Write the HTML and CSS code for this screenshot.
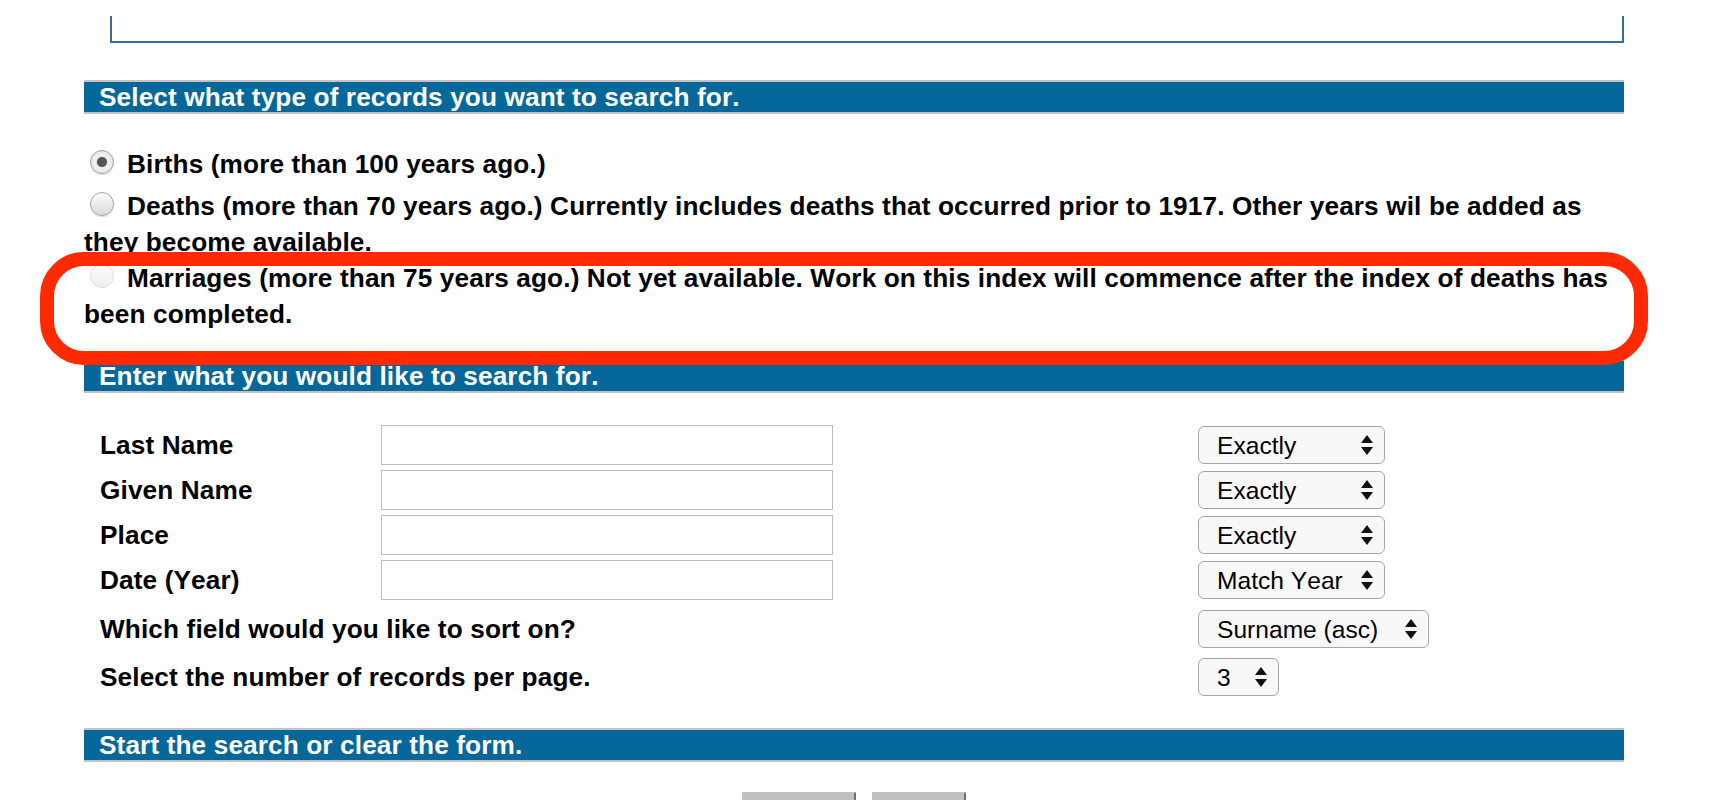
FILE: index.html
```html
<!DOCTYPE html>
<html lang="en">

<head>
    <meta charset="UTF-8">
    <meta name="viewport" content="width=device-width, initial-scale=1.0">
    <title>Search the Index</title>
    <link rel="stylesheet" href="styles.css">
</head>

<body>
    <div class="page">
        <div class="top-box"></div>

        <h2 class="bar">Select what type of records you want to search for.</h2>

        <div class="records">
            <label class="record births"><input type="radio" name="type" value="births" checked>Births (more than 100 years ago.)</label>
            <label class="record"><input type="radio" name="type" value="deaths">Deaths (more than 70 years ago.) Currently includes deaths that occurred prior to 1917. Other years wil be added as they become available.</label>
            <label class="record"><input type="radio" name="type" value="marriages" disabled>Marriages (more than 75 years ago.) Not yet available. Work on this index will commence after the index of deaths has been completed.</label>
        </div>

        <h2 class="bar">Enter what you would like to search for.</h2>

        <div class="fields">
            <label for="lastName">Last Name</label>
            <input type="text" id="lastName">
            <span class="select match">
                <select><option>Exactly</option><option>Starts with</option><option>Sounds like</option></select>
                <svg class="arrows" width="12" height="20" viewBox="0 0 12 20"><path d="M6 0L12 8H0z M6 20L0 12h12z" fill="#111"/></svg>
            </span>

            <label for="givenName">Given Name</label>
            <input type="text" id="givenName">
            <span class="select match">
                <select><option>Exactly</option><option>Starts with</option><option>Sounds like</option></select>
                <svg class="arrows" width="12" height="20" viewBox="0 0 12 20"><path d="M6 0L12 8H0z M6 20L0 12h12z" fill="#111"/></svg>
            </span>

            <label for="place">Place</label>
            <input type="text" id="place">
            <span class="select match">
                <select><option>Exactly</option><option>Starts with</option><option>Contains</option></select>
                <svg class="arrows" width="12" height="20" viewBox="0 0 12 20"><path d="M6 0L12 8H0z M6 20L0 12h12z" fill="#111"/></svg>
            </span>

            <label for="year">Date (Year)</label>
            <input type="text" id="year">
            <span class="select match">
                <select><option>Match Year</option><option>+/- 2 Years</option><option>+/- 5 Years</option></select>
                <svg class="arrows" width="12" height="20" viewBox="0 0 12 20"><path d="M6 0L12 8H0z M6 20L0 12h12z" fill="#111"/></svg>
            </span>
        </div>

        <div class="fields options">
            <label class="wide">Which field would you like to sort on?</label>
            <span class="select sort">
                <select><option>Surname (asc)</option><option>Surname (desc)</option><option>Year (asc)</option></select>
                <svg class="arrows" width="12" height="20" viewBox="0 0 12 20"><path d="M6 0L12 8H0z M6 20L0 12h12z" fill="#111"/></svg>
            </span>

            <label class="wide">Select the number of records per page.</label>
            <span class="select count">
                <select><option>3</option><option>10</option><option>25</option></select>
                <svg class="arrows" width="12" height="20" viewBox="0 0 12 20"><path d="M6 0L12 8H0z M6 20L0 12h12z" fill="#111"/></svg>
            </span>
        </div>

        <h2 class="bar">Start the search or clear the form.</h2>

        <div class="actions">
            <button type="submit" class="search-btn" aria-label="Search"></button>
            <button type="reset" class="clear-btn" aria-label="Clear"></button>
        </div>
    </div>

    <!-- annotation drawn over the screenshot -->
    <div class="marker"></div>
</body>

</html>
```

FILE: styles.css
```css
body {
    margin: 0;
    font-family: "Liberation Sans", Arial, Helvetica, sans-serif;
    font-size: 26.2px;
    font-weight: bold;
    font-kerning: none;
    letter-spacing: 0.12px;
    color: #000;
    background: #fff;
    overflow: hidden;
}

.page {
    width: 1540px;
    margin-left: 84px;
}

.top-box {
    margin: 16px 0 37px 26px;
    height: 25px;
    border: 2px solid #3b6d9a;
    border-top: none;
}

.bar {
    margin: 0;
    padding-left: 15px;
    font-size: 26.2px;
    line-height: 30px;
    color: #fff;
    background: #05679a;
    border-top: 2px solid #c3c3c3;
    border-bottom: 2px solid #c3c3c3;
}

/* Record type radios */
.records {
    margin: 32px 0 27px;
    line-height: 36px;
}

.record {
    display: block;
}

.births {
    margin-bottom: 6px;
}

.record input {
    appearance: none;
    -webkit-appearance: none;
    box-sizing: border-box;
    width: 24px;
    height: 24px;
    margin: 0 13px 0 6px;
    border: 1px solid #a4a4a4;
    border-radius: 50%;
    background: linear-gradient(#fdfdfd, #d9d9d9);
    box-shadow: 0 1px 1px rgba(0, 0, 0, 0.15);
    vertical-align: -1px;
}

.record input:checked {
    background: radial-gradient(circle, #555 0 4.5px, #e6e6e6 5.5px, #f1f1f1 7px, #d6d6d6 100%);
}

.record input:disabled {
    border-color: #dcdcdc;
    background: linear-gradient(#fdfdfd, #eeeeee);
    box-shadow: none;
}

/* Search fields */
.fields {
    display: grid;
    grid-template-columns: 281px 817px auto;
    row-gap: 5px;
    align-items: center;
    justify-items: start;
    margin-top: 32px;
    padding-left: 16px;
}

.fields input {
    box-sizing: border-box;
    width: 452px;
    height: 40px;
    margin: 0;
    border: 1px solid #bdbdbd;
    font-size: 20px;
}

.options {
    margin: 10px 0 32px;
    row-gap: 10px;
}

.wide {
    grid-column: span 2;
}

.select {
    position: relative;
    display: inline-block;
}

.select select {
    appearance: none;
    -webkit-appearance: none;
    box-sizing: border-box;
    height: 38px;
    margin: 0;
    padding: 0 0 0 18px;
    border: 1px solid #a7a7a7;
    border-radius: 6px;
    background: #f8f8f8;
    font-family: "Liberation Sans", Arial, Helvetica, sans-serif;
    font-size: 24.6px;
    font-weight: normal;
    font-kerning: none;
    color: #000;
}

.select .arrows {
    position: absolute;
    right: 12px;
    top: 9px;
    pointer-events: none;
}

.match select {
    width: 187px;
}

.sort select {
    width: 231px;
}

.count select {
    width: 81px;
}

/* Buttons */
.actions {
    display: flex;
    justify-content: center;
    gap: 16px;
    margin-top: 30px;
}

.actions button {
    height: 44px;
    border: 2px solid;
    border-color: #c0c0c0 #6e6e6e #6e6e6e #c0c0c0;
    background: #c0c0c0;
}

.search-btn {
    width: 114px;
}

.clear-btn {
    width: 94px;
}

/* Red annotation ring */
.marker {
    position: absolute;
    left: 40px;
    top: 252px;
    width: 1608px;
    height: 113px;
    box-sizing: border-box;
    border: 14px solid #ff2a00;
    border-radius: 44px;
    pointer-events: none;
}
```
